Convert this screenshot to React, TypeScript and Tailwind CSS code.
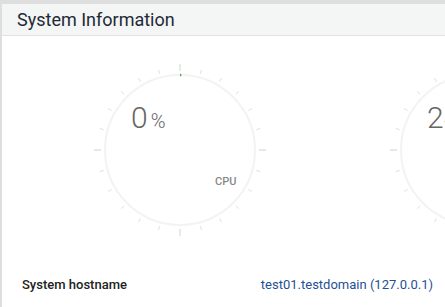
import React from "react";

const FONT = { fontFamily: "Roboto, 'Noto Sans', sans-serif" };

function Gauge({ value, label }: { value: number; label: string }) {
  const cx = 90;
  const cy = 90;
  const r = 75;
  const ticks = Array.from({ length: 24 }, (_, i) => i * 15);
  const angle = (value / 100) * 360;
  const arcEnd = (Math.max(angle, 1) - 90) * (Math.PI / 180);
  const start = -Math.PI / 2;
  return (
    <div className="relative h-[180px] w-[180px] shrink-0">
      <svg width="180" height="180" viewBox="0 0 180 180">
        <circle cx={cx} cy={cy} r={r} fill="none" stroke="#f3f3f3" strokeWidth="2" />
        {ticks.map((a) => {
          const rad = ((a - 90) * Math.PI) / 180;
          const major = a % 90 === 0;
          const r1 = 79;
          const r2 = major ? 86 : 83;
          return (
            <line
              key={a}
              x1={cx + r1 * Math.cos(rad)}
              y1={cy + r1 * Math.sin(rad)}
              x2={cx + r2 * Math.cos(rad)}
              y2={cy + r2 * Math.sin(rad)}
              stroke={major ? "#d2d2d2" : "#dedede"}
              strokeWidth="1"
            />
          );
        })}
        <path
          d={`M ${cx + r * Math.cos(start)} ${cy + r * Math.sin(start)} A ${r} ${r} 0 ${angle > 180 ? 1 : 0} 1 ${cx + r * Math.cos(arcEnd)} ${cy + r * Math.sin(arcEnd)}`}
          fill="none"
          stroke="#4caf50"
          strokeWidth="2.5"
        />
      </svg>
      <div className="absolute left-[41px] top-[43px] flex items-baseline text-[#666]" style={FONT}>
        <span className="text-[30px] font-light leading-none">{value}</span>
        <span className="ml-[3px] text-[20px] font-light leading-none">%</span>
      </div>
      <div
        className="absolute left-[125px] top-[116px] text-[11px] font-medium leading-none text-[#888]"
        style={FONT}
      >
        {label}
      </div>
    </div>
  );
}

export default function App() {
  return (
    <div className="h-[307px] w-[445px] overflow-hidden bg-white" style={FONT}>
      <div className="flex h-full flex-col border-l-2 border-t-4 border-[#dedede]">
        <div className="flex h-[32px] items-center border-b border-[#e2e2e2] bg-[#f4f5f5] pl-[15px]">
          <h2 className="text-[18px] font-normal text-[#1e2a36]">System Information</h2>
        </div>
        <div className="flex gap-[116px] pl-[88px] pt-[24px]">
          <Gauge value={0} label="CPU" />
          <Gauge value={24} label="RAM" />
        </div>
        <div className="mt-[35px] flex items-center justify-between pl-[20px] pr-[12px]">
          <span className="text-[13px] font-medium text-[#222]">System hostname</span>
          <span className="text-[13px] text-[#1f4f95]">test01.testdomain (127.0.0.1)</span>
        </div>
      </div>
    </div>
  );
}
